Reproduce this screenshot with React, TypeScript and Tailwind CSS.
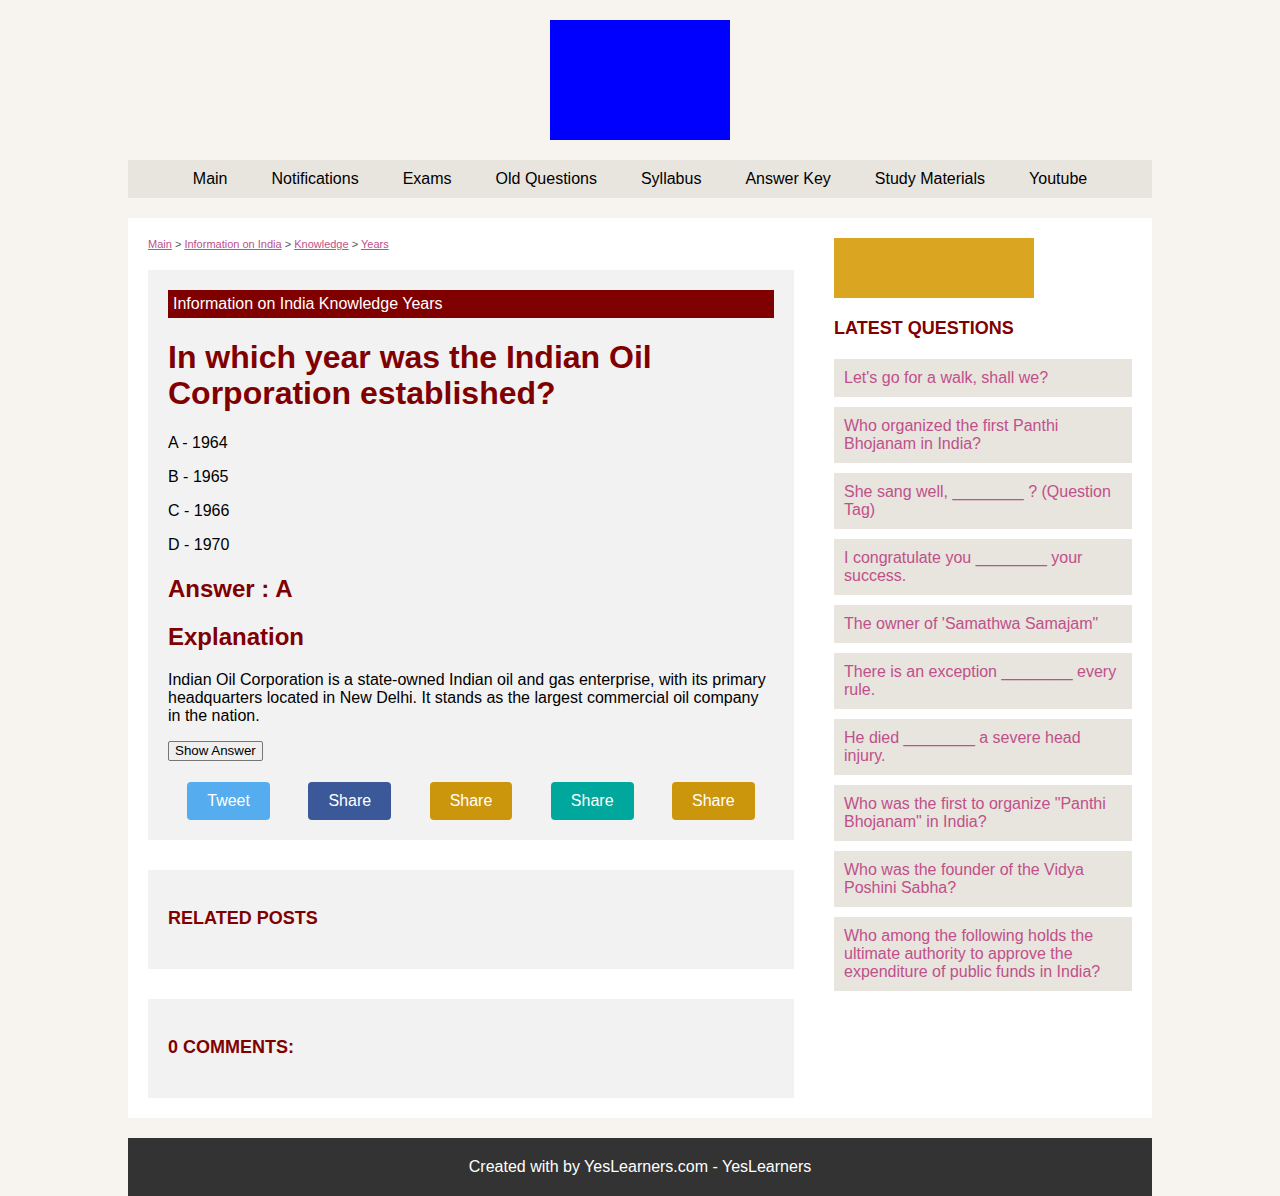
import React from 'react'

const navLinks = ['Main', 'Notifications', 'Exams', 'Old Questions', 'Syllabus', 'Answer Key', 'Study Materials', 'Youtube']

const options = ['A - 1964', 'B - 1965', 'C - 1966', 'D - 1970']

const shares = [
  { label: 'Tweet', color: 'bg-[#55acee]' },
  { label: 'Share', color: 'bg-[#3b5998]' },
  { label: 'Share', color: 'bg-[#cc960c]' },
  { label: 'Share', color: 'bg-[#00a79c]' },
  { label: 'Share', color: 'bg-[#cc960c]' },
]

const latest = [
  "Let's go for a walk, shall we?",
  'Who organized the first Panthi Bhojanam in India?',
  'She sang well, ________ ? (Question Tag)',
  'I congratulate you ________ your success.',
  "The owner of 'Samathwa Samajam\"",
  'There is an exception ________ every rule.',
  'He died ________ a severe head injury.',
  'Who was the first to organize "Panthi Bhojanam" in India?',
  'Who was the founder of the Vidya Poshini Sabha?',
  'Who among the following holds the ultimate authority to approve the expenditure of public funds in India?',
]

export default function App() {
  return (
    <div className="min-h-[1196px] bg-[#f7f4ef] font-['Liberation_Sans',Arial,sans-serif] text-black">
      {/* Logo */}
      <div className="flex justify-center pt-5">
        <div className="h-[120px] w-[180px] bg-[#0000ff]" />
      </div>

      {/* Nav */}
      <nav className="mx-auto mt-5 flex w-[1024px] justify-center bg-[#e8e5df] py-[10px]">
        {navLinks.map((l) => (
          <a key={l} href="#" className="px-[22px] text-[16px] leading-[18px] text-black">
            {l}
          </a>
        ))}
      </nav>

      {/* Content */}
      <div className="mx-auto mt-5 flex w-[1024px] gap-10 bg-white p-5">
        <main className="w-[646px] shrink-0">
          <div className="text-[11px] leading-[13px] text-[#555]">
            <a href="#" className="text-[#c0508a] underline">Main</a> &gt;{' '}
            <a href="#" className="text-[#c0508a] underline">Information on India</a> &gt;{' '}
            <a href="#" className="text-[#c0508a] underline">Knowledge</a> &gt;{' '}
            <a href="#" className="text-[#c0508a] underline">Years</a>
          </div>

          <article className="mt-[19px] bg-[#f2f2f2] p-5">
            <div className="bg-[#800000] px-[5px] py-[5px] text-[16px] leading-[18px] text-white">
              Information on India Knowledge Years
            </div>
            <h1 className="mt-[21px] text-[32px] font-bold leading-[36px] text-[#800000]">
              In which year was the Indian Oil Corporation established?
            </h1>
            <div className="mt-[23px] flex flex-col gap-4">
              {options.map((o) => (
                <p key={o} className="text-[16px] leading-[18px]">{o}</p>
              ))}
            </div>
            <h2 className="mt-[21px] text-[24px] font-bold leading-[28px] text-[#800000]">Answer : A</h2>
            <h2 className="mt-5 text-[24px] font-bold leading-[28px] text-[#800000]">Explanation</h2>
            <p className="mt-5 text-[16px] leading-[18px]">
              Indian Oil Corporation is a state-owned Indian oil and gas enterprise, with its primary headquarters located in New Delhi. It stands as the largest commercial oil company in the nation.
            </p>
            <button className="mt-4 block rounded-[2px] border border-[#767676] bg-[#efefef] px-[6px] py-[1px] text-[13.33px] leading-[16px] text-black">
              Show Answer
            </button>
            <div className="mt-[21px] flex justify-around">
              {shares.map((s, i) => (
                <a
                  key={i}
                  href="#"
                  className={`rounded-[4px] px-5 py-[10px] text-[16px] leading-[18px] text-white ${s.color}`}
                >
                  {s.label}
                </a>
              ))}
            </div>
          </article>

          <section className="mt-[30px] bg-[#f2f2f2] px-5 pb-[40px] pt-[38px]">
            <h3 className="text-[18px] font-bold leading-[21px] text-[#800000]">RELATED POSTS</h3>
          </section>

          <section className="mt-[30px] bg-[#f2f2f2] px-5 pb-[40px] pt-[38px]">
            <h3 className="text-[18px] font-bold leading-[21px] text-[#800000]">0 COMMENTS:</h3>
          </section>
        </main>

        <aside className="flex-1">
          <div className="h-[60px] w-[200px] bg-[#daa520]" />
          <h3 className="mt-5 text-[18px] font-bold leading-[21px] text-[#800000]">LATEST QUESTIONS</h3>
          <ul className="mt-5 flex flex-col gap-[10px]">
            {latest.map((q, i) => (
              <li key={i} className="bg-[#e8e4de] p-[10px] text-[16px] leading-[18px]">
                <a href="#" className="text-[#c0508a]">{q}</a>
              </li>
            ))}
          </ul>
        </aside>
      </div>

      {/* Footer */}
      <footer className="mx-auto mt-5 w-[1024px] bg-[#333333] py-5 text-center text-[16px] leading-[18px] text-white">
        Created with by YesLearners.com - YesLearners
      </footer>
    </div>
  )
}
